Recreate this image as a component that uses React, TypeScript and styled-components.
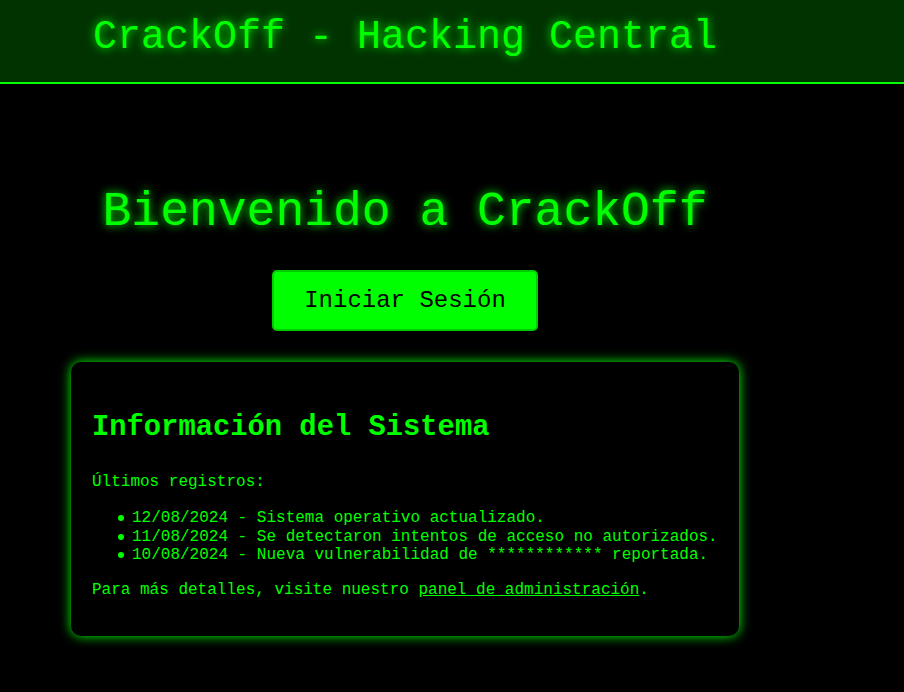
import React from "react";
import styled, { createGlobalStyle } from "styled-components";

const GlobalStyle = createGlobalStyle`
  html, body {
    margin: 0;
    padding: 0;
    background: #000000;
    color: #00ff00;
    font-family: "Liberation Mono", "Courier New", monospace;
  }
  * { box-sizing: border-box; }
`;

const Page = styled.div`
  min-height: 692px;
  background: #000000;
`;

const Header = styled.header`
  background: #003300;
  border-bottom: 2px solid #00ff00;
  padding: 15px 0 22px;
`;

const HeaderInner = styled.div`
  width: 810px;
  text-align: center;
`;

const SiteTitle = styled.h1`
  margin: 0;
  font-size: 40px;
  font-weight: normal;
  line-height: normal;
  color: #00ff00;
  text-shadow: 0 0 10px #00ff00;
`;

const Main = styled.main`
  width: 810px;
  display: flex;
  flex-direction: column;
  align-items: center;
  padding-top: 101px;
`;

const Welcome = styled.h1`
  margin: 0 0 31px;
  font-size: 48px;
  font-weight: normal;
  line-height: normal;
  color: #00ff00;
  text-shadow: 0 0 10px #00ff00;
`;

const LoginButton = styled.button`
  font-family: "Liberation Mono", "Courier New", monospace;
  font-size: 24px;
  line-height: normal;
  height: 61px;
  color: #000000;
  background: #00ff00;
  border: 2px solid #00cc00;
  border-radius: 5px;
  padding: 0 30px;
  cursor: pointer;
`;

const InfoBox = styled.section`
  margin-top: 31px;
  width: 668px;
  padding: 20px 21px 37px;
  border-radius: 10px;
  background: #000000;
  box-shadow: 0 0 12px #00ff00;
`;

const InfoTitle = styled.h2`
  margin: 29px 0 29px;
  font-size: 28.8px;
  font-weight: bold;
  line-height: normal;
  color: #00ff00;
`;

const Text = styled.p`
  margin: 0;
  font-size: 16px;
  line-height: normal;
  color: #00ff00;
`;

const LogList = styled.ul`
  margin: 18px 0 16px;
  padding-left: 40px;
  list-style: none;
  font-size: 16px;
  line-height: 18.5px;
  color: #00ff00;
`;

const LogItem = styled.li`
  position: relative;

  &::before {
    content: "";
    position: absolute;
    left: -14px;
    top: 6px;
    width: 6px;
    height: 6px;
    border-radius: 50%;
    background: #00ff00;
  }
`;

const AdminLink = styled.a`
  color: #00ff00;
  text-decoration: underline;
`;

export default function App() {
  return (
    <Page>
      <GlobalStyle />
      <Header>
        <HeaderInner>
          <SiteTitle>CrackOff - Hacking Central</SiteTitle>
        </HeaderInner>
      </Header>
      <Main>
        <Welcome>Bienvenido a CrackOff</Welcome>
        <LoginButton>Iniciar Sesión</LoginButton>
        <InfoBox>
          <InfoTitle>Información del Sistema</InfoTitle>
          <Text>Últimos registros:</Text>
          <LogList>
            <LogItem>12/08/2024 - Sistema operativo actualizado.</LogItem>
            <LogItem>11/08/2024 - Se detectaron intentos de acceso no autorizados.</LogItem>
            <LogItem>10/08/2024 - Nueva vulnerabilidad de ************ reportada.</LogItem>
          </LogList>
          <Text>
            Para más detalles, visite nuestro <AdminLink href="#">panel de administración</AdminLink>.
          </Text>
        </InfoBox>
      </Main>
    </Page>
  );
}
